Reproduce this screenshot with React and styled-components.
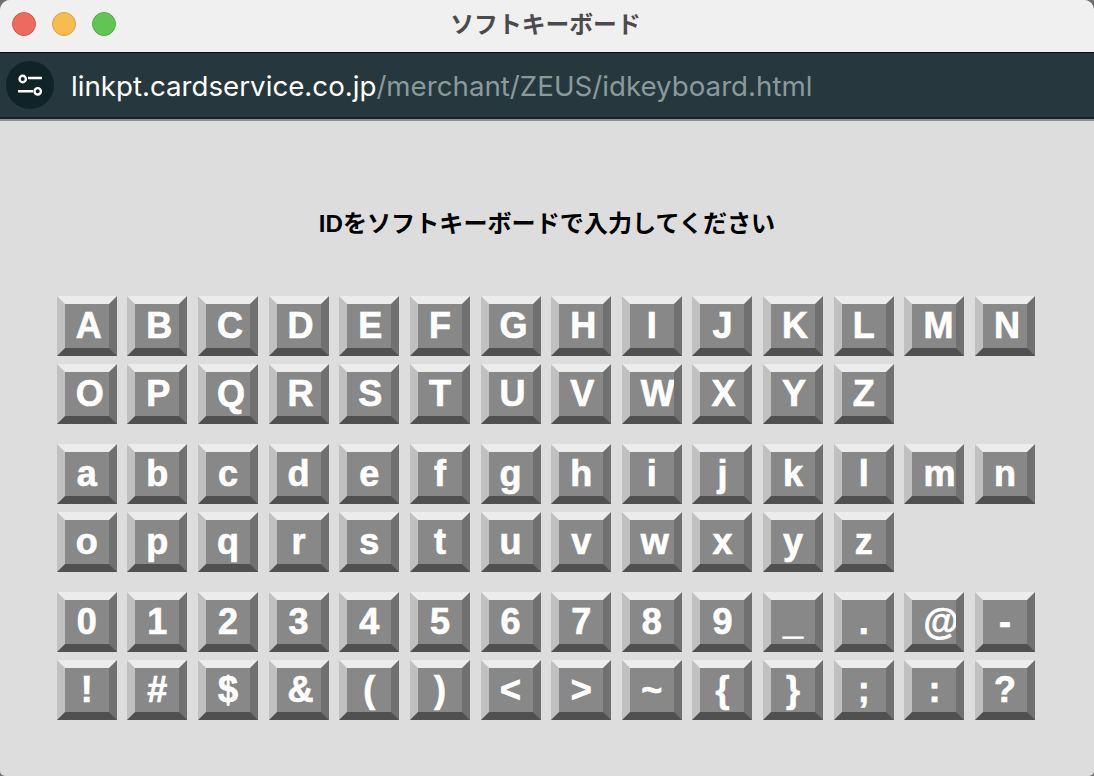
import React from "react";
import styled, { createGlobalStyle } from "styled-components";

const GlobalStyle = createGlobalStyle`
  html, body {
    margin: 0;
    padding: 0;
    height: 100%;
    background: #6f6f6f;
  }
`;

const Window = styled.div`
  width: 1094px;
  height: 776px;
  display: flex;
  flex-direction: column;
  overflow: hidden;
  border-radius: 10px 10px 5px 5px;
  background: #dddddd;
`;

const TitleBar = styled.div`
  position: relative;
  box-sizing: border-box;
  height: 53px;
  flex: none;
  display: flex;
  align-items: center;
  justify-content: center;
  padding: 0 3px 7px 0;
  background: #f0f0f0;
  border-bottom: 1px solid #0c0c0c;
`;

const Lights = styled.div`
  position: absolute;
  left: 12px;
  top: 12px;
  display: flex;
  gap: 16px;
`;

const Light = styled.span`
  width: 24px;
  height: 24px;
  box-sizing: border-box;
  border-radius: 50%;
  background: ${(p) => p.$color};
  border: 1px solid ${(p) => p.$edge};
`;

const WindowTitle = styled.div`
  font-family: "Noto Sans CJK JP", sans-serif;
  font-weight: 700;
  font-size: 23.8px;
  color: #4b4b4b;
  line-height: 1;
`;

const UrlBar = styled.div`
  height: 64px;
  flex: none;
  display: flex;
  align-items: center;
  gap: 17px;
  padding-left: 6px;
  background: #26383d;
  border-bottom: 2px solid #12242a;
  box-shadow: 0 2px 0 #909090;
`;

const SiteButton = styled.div`
  width: 48px;
  height: 48px;
  flex: none;
  display: flex;
  align-items: center;
  justify-content: center;
  border-radius: 50%;
  background: #0f2328;
`;

const Url = styled.div`
  padding-top: 2px;
  font-family: Inter, "Liberation Sans", sans-serif;
  font-size: 27.7px;
  color: #ffffff;
  white-space: nowrap;
`;

const UrlPath = styled.span`
  color: #8a9a9c;
`;

const Page = styled.main`
  flex: 1;
  display: flex;
  flex-direction: column;
  padding: 90px 0 0 56.7px;
`;

const Heading = styled.h1`
  margin: 0 0 57px -56.7px;
  height: 30px;
  line-height: 30px;
  text-align: center;
  font-family: "Liberation Sans", "Noto Sans CJK JP", sans-serif;
  font-size: 24.1px;
  font-weight: 700;
  color: #000000;
`;

const Keyboard = styled.div`
  display: flex;
  flex-direction: column;
  gap: 20px;
`;

const KeyGroup = styled.div`
  display: grid;
  grid-template-columns: repeat(14, 60px);
  column-gap: 10.65px;
  row-gap: 8px;
`;

const Key = styled.div`
  box-sizing: border-box;
  width: 60px;
  height: 60px;
  padding: 0 11px;
  overflow: hidden;
  background: #888888;
  border-style: solid;
  border-width: 8px;
  border-color: #ececec #707070 #505050 #c0c0c0;
  color: #ffffff;
  font-family: "Liberation Sans", sans-serif;
  font-size: 36px;
  font-weight: 700;
  line-height: 44px;
  text-align: center;
  -webkit-text-stroke: 0.7px #ffffff;
`;

const keyGroups = [
  "ABCDEFGHIJKLMNOPQRSTUVWXYZ",
  "abcdefghijklmnopqrstuvwxyz",
  "0123456789_.@-!#$&()<>~{};:?",
];

function SliderIcon() {
  return (
    <svg width="28" height="24" viewBox="0 0 28 24" fill="none" stroke="#ffffff" strokeWidth="2.4">
      <circle cx="6.7" cy="6" r="3.2" />
      <path d="M12 5h14" />
      <path d="M2 18.3h15" />
      <circle cx="21.7" cy="18.3" r="3.2" />
    </svg>
  );
}

export default function App() {
  return (
    <Window>
      <GlobalStyle />
      <TitleBar>
        <Lights>
          <Light $color="#ee6a5f" $edge="#d9574d" />
          <Light $color="#f5bd4f" $edge="#dea13c" />
          <Light $color="#61c454" $edge="#52ab46" />
        </Lights>
        <WindowTitle>ソフトキーボード</WindowTitle>
      </TitleBar>
      <UrlBar>
        <SiteButton>
          <SliderIcon />
        </SiteButton>
        <Url>
          linkpt.cardservice.co.jp<UrlPath>/merchant/ZEUS/idkeyboard.html</UrlPath>
        </Url>
      </UrlBar>
      <Page>
        <Heading>IDをソフトキーボードで入力してください</Heading>
        <Keyboard>
          {keyGroups.map((group) => (
            <KeyGroup key={group}>
              {group.split("").map((ch) => (
                <Key key={ch}>{ch}</Key>
              ))}
            </KeyGroup>
          ))}
        </Keyboard>
      </Page>
    </Window>
  );
}
